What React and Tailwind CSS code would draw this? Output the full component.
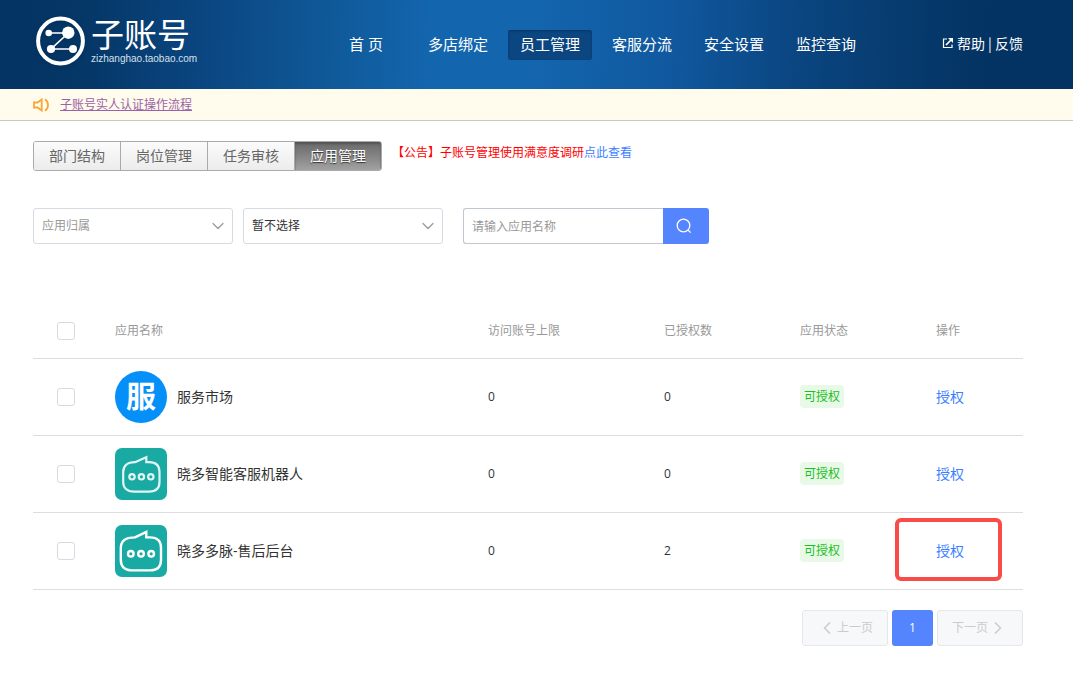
import { useState } from "react";
import clsx from "clsx";
import { ChevronDown, ChevronLeft, ChevronRight } from "lucide-react";

const NAV_ITEMS = [
  "首 页",
  "多店绑定",
  "员工管理",
  "客服分流",
  "安全设置",
  "监控查询",
];

const TABS = ["部门结构", "岗位管理", "任务审核", "应用管理"];

const APPS = [
  { id: 1, name: "服务市场", logo: "market", limit: 0, granted: 0 },
  { id: 2, name: "晓多智能客服机器人", logo: "bot", limit: 0, granted: 0 },
  {
    id: 3,
    name: "晓多多脉-售后后台",
    logo: "botLarge",
    limit: 0,
    granted: 2,
    highlighted: true,
  },
];

const BrandMark = () => (
  <svg
    viewBox="0 0 50 50"
    className="w-[50px] h-[50px] drop-shadow-sm"
    aria-hidden="true"
  >
    <circle cx="25.5" cy="25" r="22.4" fill="none" stroke="#fff" strokeWidth="4" />
    <path
      d="M13.7 17H33.3L16 33H38"
      fill="none"
      stroke="#fff"
      strokeWidth="1.6"
    />
    <circle cx="13.7" cy="17" r="3.3" fill="#fff" />
    <circle cx="33.3" cy="16.7" r="6.2" fill="#fff" />
    <circle cx="16" cy="33" r="4.1" fill="#fff" />
    <circle cx="38" cy="33" r="4" fill="#fff" />
  </svg>
);

const ExternalIcon = () => (
  <svg viewBox="0 0 12 12" className="w-3 h-3" fill="none" aria-hidden="true">
    <path d="M5 2H1.5V10.5H10V7.5" stroke="#fff" strokeWidth="1.2" />
    <path d="M4 8L9 3" stroke="#fff" strokeWidth="1.7" />
    <path d="M6 1H11V6Z" fill="#fff" />
  </svg>
);

const SpeakerIcon = () => (
  <svg
    viewBox="0 0 16 14"
    className="w-4 h-[14px]"
    fill="none"
    stroke="#f5a836"
    strokeWidth="1.8"
    aria-hidden="true"
  >
    <path d="M1 4.5H4.5L8.7 1.5V12.5L4.5 9.5H1Z" />
    <path d="M12 1.2C16 4 16 10 12 12.8" />
  </svg>
);

const SearchIcon = () => (
  <svg
    viewBox="0 0 16 16"
    className="w-4 h-4"
    fill="none"
    stroke="#fff"
    strokeWidth="1.3"
    aria-hidden="true"
  >
    <circle cx="7.5" cy="7.5" r="6.3" />
    <path d="M12 12L14.6 14.6" />
  </svg>
);

const AppLogo = ({ type }) => {
  if (type === "market") {
    return (
      <div className="w-[52px] h-[52px] pb-0.5 shrink-0 rounded-full bg-[#058ff8] flex items-center justify-center text-white text-[30px] leading-8 font-bold">
        服
      </div>
    );
  }
  return (
    <svg
      viewBox="0 0 52 52"
      className="w-[52px] h-[52px] shrink-0"
      fill="none"
      stroke="#fff"
      aria-hidden="true"
    >
      <rect width="52" height="52" rx="7" fill="#19aaa3" stroke="none" />
      {type === "bot" ? (
        <g strokeWidth="2.2" stroke="#e2f5f4">
          <path d="M20 14.2L31.3 9.3V14.2H34C41 14.2 44.5 18 44.5 24V34C44.5 40 41 43.6 34 43.6H19C12 43.6 8.2 40 8.2 34V24C8.2 18 12 14.2 20 14.2Z" />
          <circle cx="17" cy="28.8" r="2.7" />
          <circle cx="26.4" cy="28.8" r="2.7" />
          <circle cx="35.8" cy="28.8" r="2.7" />
        </g>
      ) : (
        <g strokeWidth="2.4">
          <path d="M20 12.4L31.3 7V12.4H35C42.5 12.4 46 16.5 46 23V35C46 41.5 42.5 45.4 35 45.4H17C9.5 45.4 5.8 41.5 5.8 35V23C5.8 16.5 9.5 12.4 20 12.4Z" />
          <circle cx="15.8" cy="28.8" r="2.8" />
          <circle cx="26" cy="28.8" r="2.8" />
          <circle cx="36.2" cy="28.8" r="2.8" />
        </g>
      )}
    </svg>
  );
};

const FilterSelect = ({ label, options, muted }) => (
  <div className="relative w-[200px]">
    <select
      aria-label={label}
      className={clsx(
        "appearance-none w-full h-9 px-2 rounded-[3px] border border-[#d8dae2] bg-white text-xs",
        muted ? "text-[#999]" : "text-[#333]"
      )}
    >
      {options.map((option) => (
        <option key={option}>{option}</option>
      ))}
    </select>
    <ChevronDown
      className="absolute right-[5px] top-2 w-5 h-5 text-[#999] pointer-events-none"
      strokeWidth={1.5}
    />
  </div>
);

const Checkbox = ({ label, checked, onChange }) => (
  <input
    type="checkbox"
    aria-label={label}
    checked={checked}
    onChange={onChange}
    className="block mx-auto appearance-none w-[18px] h-[18px] rounded-[3px] border border-[#d8dae2] bg-white checked:bg-[#5584ff]"
  />
);

const Header = () => (
  <header className="h-[89px] pl-[35px] pr-[50px] flex items-center justify-between text-white bg-[linear-gradient(92deg,#033362_0%,#053767_8%,#0b4783_20%,#0f5897_30%,#1365ad_40%,#1365ad_50%,#1059a0_62%,#0b4783_73%,#073c70_83%,#033362_92%)]">
    <a href="#" className="w-[289px] pb-2 flex items-center gap-1.5">
      <BrandMark />
      <span className="flex flex-col">
        <span className="text-[33px] leading-9 font-normal">子账号</span>
        <span className="font-['Liberation_Sans'] text-[10px] leading-3 text-[#d3e0ec]">
          zizhanghao.taobao.com
        </span>
      </span>
    </a>
    <nav className="flex gap-2">
      {NAV_ITEMS.map((item) => (
        <a
          key={item}
          href="#"
          className={clsx(
            "w-[84px] h-[30px] flex items-center justify-center rounded-[3px] text-[15px] whitespace-pre",
            item === "员工管理" &&
              "bg-[#0b4680] shadow-[inset_0_1px_2px_#08345f]"
          )}
        >
          {item}
        </a>
      ))}
    </nav>
    <div className="ml-auto pb-1 flex items-center gap-[3px] text-sm leading-5 font-['Noto_Sans_CJK_SC',sans-serif]">
      <ExternalIcon />
      <span>
        <a href="#">帮助</a> | <a href="#">反馈</a>
      </span>
    </div>
  </header>
);

const Pagination = () => (
  <div className="mt-5 flex justify-end gap-1 text-xs">
    <button
      disabled
      className="w-[86px] h-9 flex items-center justify-center rounded-[3px] border border-[#e6e7eb] bg-[#f7f8fa] text-[#ccc]"
    >
      <ChevronLeft className="w-5 h-5" />
      上一页
    </button>
    <button className="w-[41px] h-9 rounded-[3px] bg-[#5584ff] text-white font-medium">
      1
    </button>
    <button
      disabled
      className="w-[86px] h-9 flex items-center justify-center rounded-[3px] border border-[#e6e7eb] bg-[#f7f8fa] text-[#ccc]"
    >
      下一页
      <ChevronRight className="w-5 h-5" />
    </button>
  </div>
);

const App = () => {
  const [selected, setSelected] = useState([]);
  const allSelected = selected.length === APPS.length;

  const toggleAll = () => setSelected(allSelected ? [] : APPS.map((a) => a.id));
  const toggleOne = (id) =>
    setSelected((prev) =>
      prev.includes(id) ? prev.filter((x) => x !== id) : [...prev, id]
    );

  return (
    <div className="min-h-screen bg-white text-[#333] font-['Open_Sans','Noto_Sans_CJK_SC',sans-serif]">
      <Header />

      {/* Notice bar */}
      <div className="h-8 pl-[33px] flex items-center gap-[11px] bg-[#fffbed] border-b border-[#ccc9c0]">
        <SpeakerIcon />
        <a href="#" className="text-xs text-[#9b62a7] underline">
          子账号实人认证操作流程
        </a>
      </div>

      <main className="pl-[33px] pr-[50px] pt-5 pb-6">
        {/* Section tabs and announcement */}
        <div className="flex items-start">
          <div className="flex h-[30px] rounded-[3px] border border-[#aaa] overflow-hidden">
            {TABS.map((tab) => (
              <button
                key={tab}
                className={clsx(
                  "text-sm leading-5",
                  tab === "应用管理"
                    ? "w-[86px] text-white bg-linear-to-b from-[#686868] to-[#a2a2a2] [text-shadow:0_1px_1px_#333] shadow-[inset_0_2px_2px_#555]"
                    : "w-[87px] text-[#666] bg-linear-to-b from-[#fbfbfb] to-[#ececec] border-r border-[#aaa]"
                )}
              >
                {tab}
              </button>
            ))}
          </div>
          <p className="ml-2.5 text-xs leading-6 text-[#f00]">
            【公告】子账号管理使用满意度调研
            <a href="#" className="text-[#3d7fff]">
              点此查看
            </a>
          </p>
        </div>

        {/* Filters */}
        <div className="mt-[37px] flex">
          <div className="flex gap-2.5">
            <FilterSelect label="应用归属" options={["应用归属"]} muted />
            <FilterSelect label="选择" options={["暂不选择"]} />
          </div>
          <form
            className="ml-5 flex"
            onSubmit={(e) => e.preventDefault()}
          >
            <input
              type="text"
              aria-label="应用名称"
              placeholder="请输入应用名称"
              className="w-[200px] h-9 px-2 rounded-l-[3px] border border-r-0 border-[#c4c6cf] text-xs placeholder:text-[#999]"
            />
            <button
              type="submit"
              aria-label="搜索"
              className="w-[46px] h-9 pr-1 flex items-center justify-center rounded-r-[3px] bg-[#5584ff]"
            >
              <SearchIcon />
            </button>
          </form>
        </div>

        {/* Apps table */}
        <table className="mt-15 w-full table-fixed border-collapse text-left text-xs">
          <colgroup>
            <col className="w-[66px]" />
            <col />
            <col className="w-[176px]" />
            <col className="w-[136px]" />
            <col className="w-[136px]" />
            <col className="w-[103px]" />
          </colgroup>
          <thead>
            <tr className="h-[54px] border-b border-[#dcdde0] text-[#999]">
              <th>
                <Checkbox
                  label="全选"
                  checked={allSelected}
                  onChange={toggleAll}
                />
              </th>
              <th className="px-4 font-normal">应用名称</th>
              <th className="px-4 font-normal">访问账号上限</th>
              <th className="px-4 font-normal">已授权数</th>
              <th className="px-4 font-normal">应用状态</th>
              <th className="px-4 font-normal">操作</th>
            </tr>
          </thead>
          <tbody>
            {APPS.map((app) => (
              <tr key={app.id} className="h-[77px] border-b border-[#dcdde0]">
                <td>
                  <Checkbox
                    label={app.name}
                    checked={selected.includes(app.id)}
                    onChange={() => toggleOne(app.id)}
                  />
                </td>
                <td className="px-4">
                  <div className="flex items-center gap-2.5 text-sm">
                    <AppLogo type={app.logo} />
                    {app.name}
                  </div>
                </td>
                <td className="px-4">{app.limit}</td>
                <td className="px-4">{app.granted}</td>
                <td className="px-4">
                  <span className="inline-block px-1 rounded bg-[#e8f9e8] text-[#1cc01c] leading-[23px]">
                    可授权
                  </span>
                </td>
                <td className="relative px-4">
                  <a href="#" className="text-sm text-[#3d7fff]">
                    授权
                  </a>
                  {app.highlighted && (
                    <span className="absolute -left-[25px] right-[21px] top-[5px] bottom-2 rounded-md border-4 border-[#f94b48] pointer-events-none" />
                  )}
                </td>
              </tr>
            ))}
          </tbody>
        </table>

        <Pagination />
      </main>
    </div>
  );
};

export default App;
